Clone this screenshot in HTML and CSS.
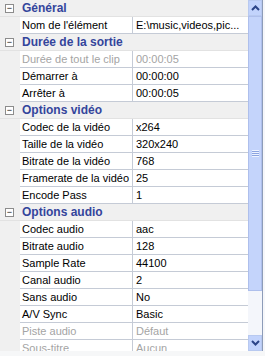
FILE: index.html
```html
<!DOCTYPE html>
<html lang="fr">
<head>
    <meta charset="UTF-8">
    <title>Propriétés</title>
    <link rel="stylesheet" href="styles.css">
</head>
<body>

<div class="grid">
    <div class="rows">
        <div class="cat"><span class="box">&minus;</span><span class="cat-name">Général</span></div>
        <div class="row"><span class="name">Nom de l'élément</span><span class="val">E:\music,videos,pic...</span></div>

        <div class="cat"><span class="box">&minus;</span><span class="cat-name">Durée de la sortie</span></div>
        <div class="row off"><span class="name">Durée de tout le clip</span><span class="val">00:00:05</span></div>
        <div class="row"><span class="name">Démarrer à</span><span class="val">00:00:00</span></div>
        <div class="row"><span class="name">Arrêter à</span><span class="val">00:00:05</span></div>

        <div class="cat"><span class="box">&minus;</span><span class="cat-name">Options vidéo</span></div>
        <div class="row"><span class="name">Codec de la vidéo</span><span class="val">x264</span></div>
        <div class="row"><span class="name">Taille de la vidéo</span><span class="val">320x240</span></div>
        <div class="row"><span class="name">Bitrate de la vidéo</span><span class="val">768</span></div>
        <div class="row"><span class="name">Framerate de la vidéo</span><span class="val">25</span></div>
        <div class="row"><span class="name">Encode Pass</span><span class="val">1</span></div>

        <div class="cat"><span class="box">&minus;</span><span class="cat-name">Options audio</span></div>
        <div class="row"><span class="name">Codec audio</span><span class="val">aac</span></div>
        <div class="row"><span class="name">Bitrate audio</span><span class="val">128</span></div>
        <div class="row"><span class="name">Sample Rate</span><span class="val">44100</span></div>
        <div class="row"><span class="name">Canal audio</span><span class="val">2</span></div>
        <div class="row"><span class="name">Sans audio</span><span class="val">No</span></div>
        <div class="row"><span class="name">A/V Sync</span><span class="val">Basic</span></div>
        <div class="row off"><span class="name">Piste audio</span><span class="val">Défaut</span></div>
        <div class="row off"><span class="name">Sous-titre</span><span class="val">Aucun</span></div>
    </div>

    <div class="scroll">
        <div class="btn">
            <svg width="9" height="6" viewBox="0 0 9 6"><path d="M1 5 L4.5 1.5 L8 5" fill="none" stroke="#2b4488" stroke-width="2"/></svg>
        </div>
        <div class="thumb"><span class="grip"></span></div>
        <div class="track"></div>
        <div class="btn">
            <svg width="9" height="6" viewBox="0 0 9 6"><path d="M1 1 L4.5 4.5 L8 1" fill="none" stroke="#2b4488" stroke-width="2"/></svg>
        </div>
    </div>
</div>

</body>
</html>
```

FILE: styles.css
```css
body {
    margin: 0;
    background: #f6f7f8;
    font-family: "Liberation Sans", Arial, sans-serif;
    font-size: 11px;
    color: #000;
}
.grid {
    display: flex;
    width: 265px;
    height: 351px;
    overflow: hidden;
    background: #f6f7fa;
}
.rows {
    width: 248px;
    flex: none;
    background: #f0f0f0;
}
.cat, .row {
    display: flex;
    height: 17px;
    align-items: center;
    box-sizing: border-box;
}
.cat {
    background: #f0f0f0;
    border-bottom: 1px solid #e2e2e2;
}
.box {
    width: 9px;
    height: 9px;
    margin: 0 8px 0 5px;
    border: 1px solid #8c8c8c;
    background: #fff;
    box-sizing: border-box;
    font-size: 9px;
    line-height: 6px;
    text-align: center;
    color: #000;
}
.cat-name {
    font-size: 12px;
    font-weight: bold;
    color: #34459c;
}
.row .name, .row .val {
    height: 17px;
    line-height: 16px;
    border-bottom: 1px solid #c5cbd6;
    box-sizing: border-box;
    background: #fff;
    white-space: nowrap;
    overflow: hidden;
}
.row .name {
    margin-left: 20px;
    width: 113px;
    padding-left: 2px;
    border-right: 1px solid #c5cbd6;
}
.row .val {
    width: 115px;
    padding-left: 3px;
}
.row.off {
    color: #a4a4a4;
}
.scroll {
    width: 15px;
    flex: none;
    display: flex;
    flex-direction: column;
    background: #f4f6fb;
    border-right: 1px solid #8d9cb8;
    box-sizing: border-box;
}
.btn {
    height: 16px;
    flex: none;
    display: flex;
    align-items: center;
    justify-content: center;
    background: #c2d3fc;
    border: 1px solid #b8c9f0;
    box-sizing: border-box;
}
.thumb {
    height: 275px;
    flex: none;
    background: #c4d4fb;
    border: 1px solid #aebfec;
    box-sizing: border-box;
    display: flex;
    align-items: center;
    justify-content: center;
}
.grip {
    width: 7px;
    height: 7px;
    background: repeating-linear-gradient(#eef3ff 0 1px, #8ca4e0 1px 2px);
}
.track {
    flex: 1;
}
```
